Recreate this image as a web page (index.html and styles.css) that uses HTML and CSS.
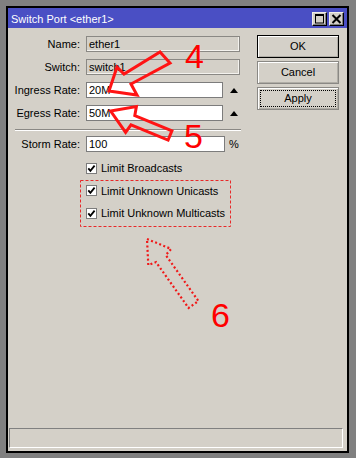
FILE: index.html
```html
<!DOCTYPE html>
<html lang="en">
<head>
    <meta charset="UTF-8">
    <meta name="viewport" content="width=device-width, initial-scale=1.0">
    <title>Switch Port &lt;ether1&gt;</title>
    <link rel="stylesheet" href="styles.css">
</head>
<body>
    <div class="window">
        <div class="titlebar">
            <span class="title">Switch Port &lt;ether1&gt;</span>
            <span class="tbtn">
                <svg width="13" height="12" viewBox="0 0 13 12"><rect x="2.5" y="1.5" width="8" height="8.5" fill="none" stroke="#000" stroke-width="1"/><rect x="2" y="1" width="9" height="2" fill="#000"/></svg>
            </span>
            <span class="tbtn">
                <svg width="13" height="12" viewBox="0 0 13 12"><path d="M2.5 2 L10.5 10 M10.5 2 L2.5 10" stroke="#000" stroke-width="2"/></svg>
            </span>
        </div>
        <div class="client">
            <div class="main">
                <!-- form fields -->
                <div class="form">
                    <div class="row">
                        <span class="lbl">Name:</span>
                        <div class="field ro wide">ether1</div>
                    </div>
                    <div class="row">
                        <span class="lbl">Switch:</span>
                        <div class="field ro wide">switch1</div>
                    </div>
                    <div class="row">
                        <span class="lbl">Ingress Rate:</span>
                        <div class="field rate">20M</div>
                        <span class="up"></span>
                    </div>
                    <div class="row last">
                        <span class="lbl">Egress Rate:</span>
                        <div class="field rate">50M</div>
                        <span class="up"></span>
                    </div>
                    <div class="sep"></div>
                    <div class="row last">
                        <span class="lbl">Storm Rate:</span>
                        <div class="field storm">100</div>
                        <span class="unit">%</span>
                    </div>
                    <div class="checks">
                        <div class="check"><span class="box"><svg width="9" height="9" viewBox="0 0 9 9"><path d="M1.3 4.3 L3.4 6.8 L7.6 1.6" fill="none" stroke="#000" stroke-width="1.8"/></svg></span>Limit Broadcasts</div>
                        <div class="check"><span class="box"><svg width="9" height="9" viewBox="0 0 9 9"><path d="M1.3 4.3 L3.4 6.8 L7.6 1.6" fill="none" stroke="#000" stroke-width="1.8"/></svg></span>Limit Unknown Unicasts</div>
                        <div class="check"><span class="box"><svg width="9" height="9" viewBox="0 0 9 9"><path d="M1.3 4.3 L3.4 6.8 L7.6 1.6" fill="none" stroke="#000" stroke-width="1.8"/></svg></span>Limit Unknown Multicasts</div>
                    </div>
                </div>

                <!-- dialog buttons -->
                <div class="buttons">
                    <div class="btn default">OK</div>
                    <div class="btn">Cancel</div>
                    <div class="btn focus">Apply</div>
                </div>
            </div>
            <div class="status"></div>
        </div>
    </div>

    <!-- red annotations drawn over the screenshot -->
    <svg class="marks" width="356" height="458" viewBox="0 0 356 458">
        <polygon points="109,91 117,67 124,74 160,52 170,63 131,84 137,95" fill="none" stroke="#ff1414" stroke-width="3"/>
        <polygon points="110.7,111 136.4,106.6 134.8,115.6 171.9,130.9 168.1,140.1 131,124.8 125.6,132.4" fill="none" stroke="#ff1414" stroke-width="3"/>
        <polygon points="147,239 171.1,248.9 165.8,255.1 198.4,301 188.6,308 156,262.1 148.3,265.1" fill="none" stroke="#f01818" stroke-width="2.2" stroke-dasharray="2 2.4"/>
        <rect x="80.5" y="180.5" width="150" height="46" fill="none" stroke="#e82828" stroke-width="1" stroke-dasharray="3 2"/>
        <text class="num" x="185" y="68">4</text>
        <text class="num" x="184" y="147.5">5</text>
        <text class="num" x="211" y="327">6</text>
    </svg>
</body>
</html>
```

FILE: styles.css
```css
body {
    margin: 0;
    background: #808080;
    font-family: "Liberation Sans", Arial, sans-serif;
    font-size: 11px;
    color: #000;
    position: relative;
}
.window {
    margin: 6px 0 0 6px;
    width: 339px;
    height: 443px;
    border: 2px solid #000;
    background: #d4d0c8;
}
.titlebar {
    height: 20px;
    background: #4a4fc4;
    display: flex;
    align-items: center;
    padding: 0 3px 0 3px;
}
.title {
    color: #fff;
    flex: 1;
    padding-top: 2px;
    font-size: 11px;
}
.tbtn {
    width: 15px;
    height: 14px;
    box-sizing: border-box;
    margin-top: 2px;
    margin-left: 2px;
    background: #d4d0c8;
    border: 1px solid #000;
    border-top-color: #f0eee8;
    border-left-color: #f0eee8;
    box-shadow: inset -1px -1px #808080;
    display: flex;
    align-items: center;
    justify-content: center;
}
.tbtn svg {
    display: block;
}
.client {
    height: 423px;
    display: flex;
    flex-direction: column;
}
.main {
    display: flex;
}
.form {
    flex: 1;
    padding-top: 8px;
}
.row {
    display: flex;
    align-items: center;
    height: 16px;
    margin-bottom: 7px;
}
.row.last {
    margin-bottom: 0;
}
.lbl {
    width: 72px;
    margin-right: 6px;
    text-align: right;
    white-space: nowrap;
}
.field {
    height: 16px;
    box-sizing: border-box;
    border: 1px solid #7c7c7c;
    background: #fff;
    padding-left: 2px;
    line-height: 14px;
}
.field.ro {
    background: #d4d0c8;
    border-color: #8a8884;
    box-shadow: inset -1px -1px #f4f2ee;
}
.wide {
    width: 154px;
}
.rate {
    width: 137px;
}
.storm {
    width: 139px;
}
.up {
    margin-left: 7px;
    width: 0;
    height: 0;
    border-left: 4px solid transparent;
    border-right: 4px solid transparent;
    border-bottom: 5px solid #000;
}
.unit {
    margin-left: 4px;
}
.sep {
    margin: 8px 16px 5px 7px;
    border-top: 1px solid #8a8884;
    border-bottom: 1px solid #fff;
}
.checks {
    margin-top: 5px;
    padding-left: 78px;
}
.check {
    height: 22.5px;
    display: flex;
    align-items: center;
}
.box {
    width: 11px;
    height: 11px;
    box-sizing: border-box;
    border: 1px solid #7c7c7c;
    background: #fff;
    margin-right: 4px;
    display: flex;
    align-items: center;
    justify-content: center;
}
.box svg {
    display: block;
}
.buttons {
    width: 82px;
    margin-right: 8px;
    padding-top: 7px;
    display: flex;
    flex-direction: column;
    gap: 3px;
}
.btn {
    height: 23px;
    box-sizing: border-box;
    border: 1px solid #8a8884;
    box-shadow: inset 1px 1px #fff, inset -1px -1px #b0ada6;
    text-align: center;
    line-height: 21px;
}
.btn.default {
    border-color: #000;
}
.btn.focus {
    outline: 1px dotted #000;
    outline-offset: -4px;
}
.status {
    margin: auto 4px 3px 1px;
    height: 20px;
    box-sizing: border-box;
    border: 1px solid #fff;
    border-top-color: #808080;
    border-left-color: #808080;
}
.marks {
    position: absolute;
    top: 0;
    left: 0;
    pointer-events: none;
}
.num {
    font-family: "Liberation Sans", Arial, sans-serif;
    font-size: 34px;
    fill: #ff0000;
}
```
